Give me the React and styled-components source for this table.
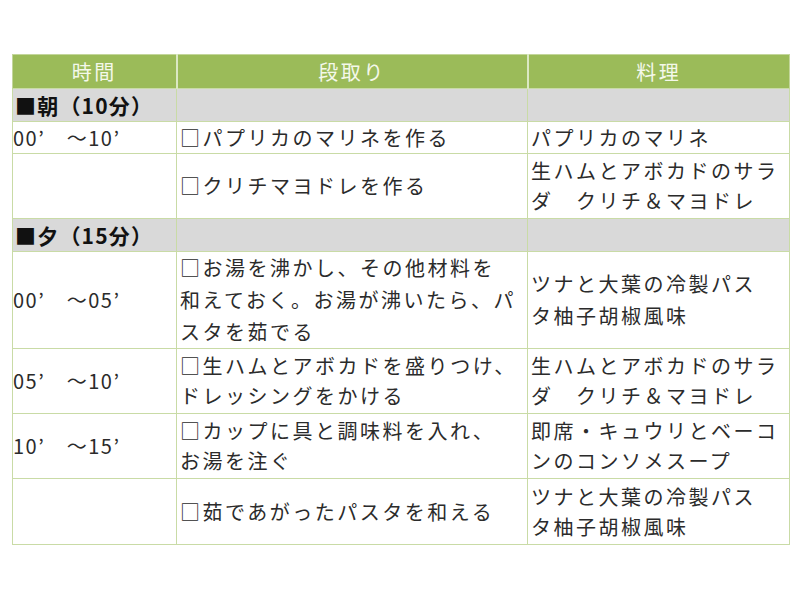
import React from 'react';
import styled, { createGlobalStyle } from 'styled-components';

const Global = createGlobalStyle`
  body {
    margin: 0;
    background: #fff;
    font-family: "Noto Sans CJK JP", "Noto Sans", sans-serif;
  }
`;

const Page = styled.div`
  padding: 54px 0 0 12px;
`;

const Table = styled.table`
  border-collapse: collapse;
  table-layout: fixed;
  width: 777px;
  color: #2b2b2b;
  font-size: 20px;
  letter-spacing: 2.5px;
  line-height: 30px;
`;

const Col = styled.col`
  width: ${p => p.w}px;
`;

const HeadCell = styled.th`
  background: #9bbb59;
  color: #f4f8ea;
  font-weight: 400;
  font-size: 20px;
  height: 33px;
  padding: 0;
  text-align: center;
  border-left: 2px solid #dbe8c3;
  border-top: 1px solid #c3d69b;
  &:first-child {
    border-left: 1px solid #c3d69b;
  }
  &:last-child {
    border-right: 1px solid #c3d69b;
  }
`;

const Row = styled.tr`
  height: ${p => p.h}px;
`;

const Cell = styled.td`
  border: 1.5px solid #c9dba6;
  padding: 0 0 0 ${p => (p.first ? 0 : 3)}px;
  vertical-align: middle;
  white-space: nowrap;
  overflow: hidden;
  line-height: ${p => (p.tall ? 32 : 30)}px;
  background: ${p => (p.section ? '#d9d9d9' : '#fff')};
`;

const SectionLabel = styled.span`
  display: inline-block;
  padding-left: 2px;
  color: #111;
  font-size: 21px;
  font-weight: 700;
  letter-spacing: 1.2px;
`;

const Time = styled.span`
  letter-spacing: 1.5px;
`;

const Lines = ({ lines }) =>
  lines.map((l, i) => (
    <React.Fragment key={i}>
      {i > 0 && <br />}
      {l}
    </React.Fragment>
  ));

const sections = [
  {
    label: '■朝（10分）',
    rows: [
      { h: 32, time: '00’　～10’', step: ['□パプリカのマリネを作る'], dish: ['パプリカのマリネ'] },
      { h: 65, time: '', step: ['□クリチマヨドレを作る'], dish: ['生ハムとアボカドのサラ', 'ダ　クリチ＆マヨドレ'] },
    ],
  },
  {
    label: '■夕（15分）',
    rows: [
      {
        h: 96,
        tall: true,
        time: '00’　～05’',
        step: ['□お湯を沸かし、その他材料を', '和えておく。お湯が沸いたら、パ', 'スタを茹でる'],
        dish: ['ツナと大葉の冷製パス', 'タ柚子胡椒風味'],
      },
      {
        h: 65,
        time: '05’　～10’',
        step: ['□生ハムとアボカドを盛りつけ、', 'ドレッシングをかける'],
        dish: ['生ハムとアボカドのサラ', 'ダ　クリチ＆マヨドレ'],
      },
      {
        h: 65,
        time: '10’　～15’',
        step: ['□カップに具と調味料を入れ、', 'お湯を注ぐ'],
        dish: ['即席・キュウリとベーコ', 'ンのコンソメスープ'],
      },
      { h: 66, time: '', step: ['□茹であがったパスタを和える'], dish: ['ツナと大葉の冷製パス', 'タ柚子胡椒風味'] },
    ],
  },
];

export default function App() {
  return (
    <>
      <Global />
      <Page>
        <Table>
          <colgroup>
            <Col w={164} />
            <Col w={351} />
            <Col w={262} />
          </colgroup>
          <thead>
            <tr>
              <HeadCell>時間</HeadCell>
              <HeadCell>段取り</HeadCell>
              <HeadCell>料理</HeadCell>
            </tr>
          </thead>
          <tbody>
            {sections.map(s => (
              <React.Fragment key={s.label}>
                <Row h={33}>
                  <Cell section first>
                    <SectionLabel>{s.label}</SectionLabel>
                  </Cell>
                  <Cell section />
                  <Cell section />
                </Row>
                {s.rows.map((r, i) => (
                  <Row key={i} h={r.h}>
                    <Cell first>
                      <Time>{r.time}</Time>
                    </Cell>
                    <Cell tall={r.tall}>
                      <Lines lines={r.step} />
                    </Cell>
                    <Cell tall={r.tall}>
                      <Lines lines={r.dish} />
                    </Cell>
                  </Row>
                ))}
              </React.Fragment>
            ))}
          </tbody>
        </Table>
      </Page>
    </>
  );
}
